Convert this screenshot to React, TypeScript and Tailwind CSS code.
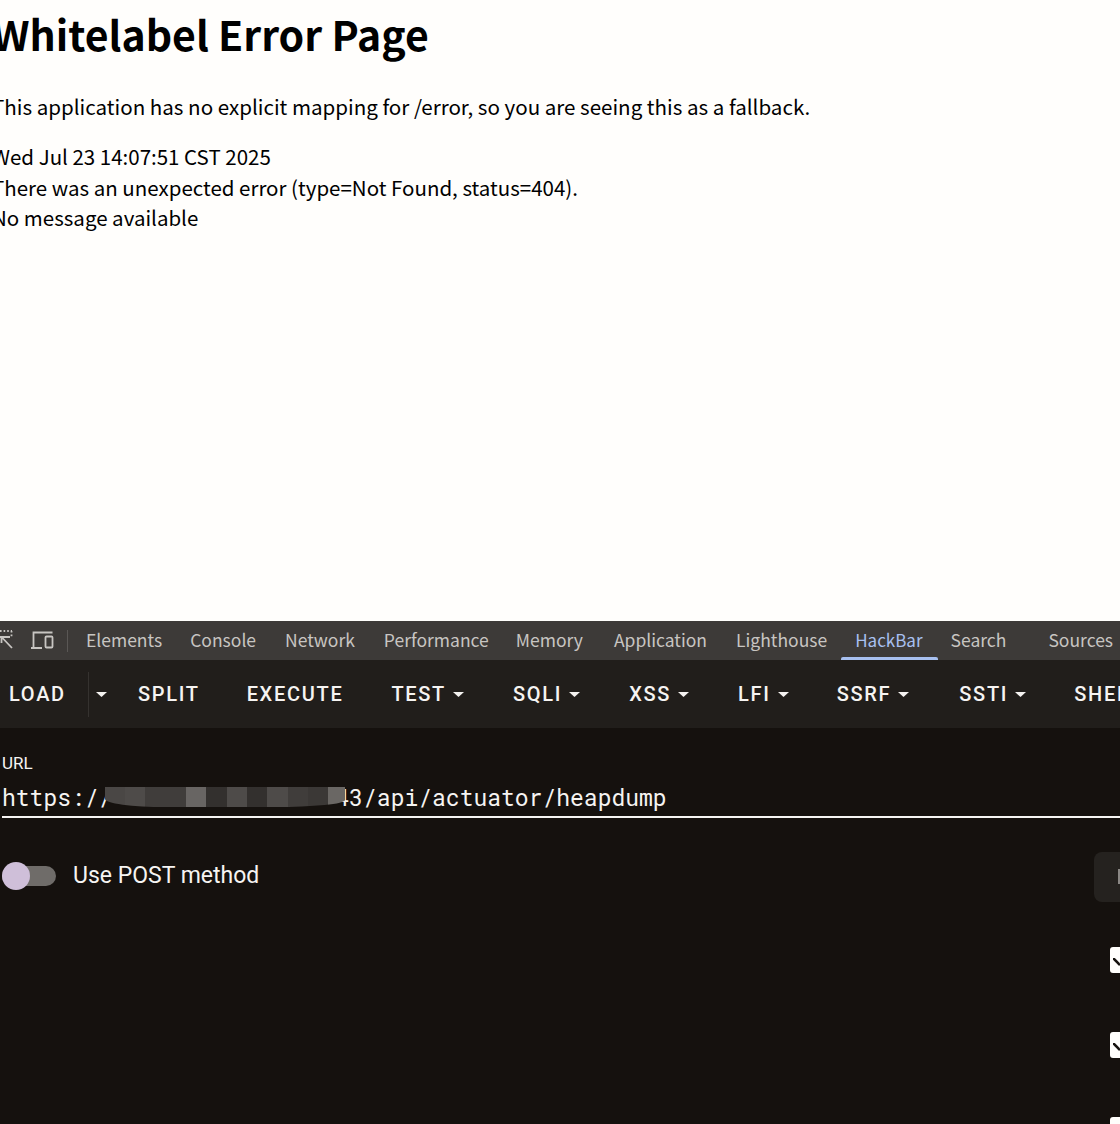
const tabs = [
  { name: "Elements", ml: "ml-[18px]" },
  { name: "Console", ml: "ml-[28px]" },
  { name: "Network", ml: "ml-[29px]" },
  { name: "Performance", ml: "ml-[29px]" },
  { name: "Memory", ml: "ml-[27px]" },
  { name: "Application", ml: "ml-[31px]" },
  { name: "Lighthouse", ml: "ml-[29px]" },
]

const tools = [
  { name: "TEST", ml: "ml-[48px]" },
  { name: "SQLI", ml: "ml-[49px]" },
  { name: "XSS", ml: "ml-[49px]" },
  { name: "LFI", ml: "ml-[49px]" },
  { name: "SSRF", ml: "ml-[48px]" },
  { name: "SSTI", ml: "ml-[50px]" },
]

const blur = [
  "w-[20px] bg-[#4a4745]",
  "w-[20px] bg-[#4e4b49]",
  "w-[41px] bg-[#403d3b]",
  "w-[20px] bg-[#686563]",
  "w-[21px] bg-[#33302e]",
  "w-[20px] bg-[#4e4b49]",
  "w-[20px] bg-[#33302e]",
  "w-[21px] bg-[#4e4b49]",
  "w-[20px] bg-[#403d3b]",
  "w-[20px] bg-[#3b3836]",
  "w-[17px] bg-[#6a6764]",
]

function Caret({ className }: { className?: string }) {
  return (
    <svg width="11" height="5" viewBox="0 0 11 5" className={className}>
      <path d="M0 0h11L5.500 5z" fill="#f4f2f0" />
    </svg>
  )
}

function Check() {
  return (
    <div className="w-[20px] h-[26px] bg-[#fffefc] rounded-[3px] shrink-0 overflow-hidden pl-[3px] pt-[11px]">
      <svg width="17" height="12" viewBox="0 0 17 12">
        <path d="M0 0l7 7" stroke="#15110e" strokeWidth="2.6" fill="none" />
      </svg>
    </div>
  )
}

export default function App() {
  return (
    <div className="w-[1120px] h-[1124px] overflow-hidden flex flex-col bg-[#fffefc]">
      {/* error page */}
      <div className="h-[621px] shrink-0 text-black font-['Noto_Sans_CJK_SC','Noto_Sans',sans-serif] -ml-[8px]">
        <h1 className="pt-[5px] text-[41px] leading-[56px] font-bold whitespace-nowrap">Whitelabel Error Page</h1>
        <p className="mt-[29.5px] text-[20.57px] leading-[30px] whitespace-nowrap">
          This application has no explicit mapping for /error, so you are seeing this as a fallback.
        </p>
        <div className="mt-[20.5px] text-[20.5px] leading-[30.5px] whitespace-nowrap">
          <div>Wed Jul 23 14:07:51 CST 2025</div>
          <div>There was an unexpected error (type=Not Found, status=404).</div>
          <div>No message available</div>
        </div>
      </div>

      {/* devtools tab strip */}
      <div className="h-[39px] shrink-0 flex items-center bg-[#3d3a38] text-[#c8c5c2] text-[17.5px] leading-[26px] whitespace-nowrap font-['Noto_Sans_CJK_SC','Noto_Sans',sans-serif]">
        <svg width="67" height="39" viewBox="0 0 67 39" className="shrink-0" fill="none" stroke="#c8c5c2" strokeWidth="1.8">
          <path d="M0 10h12M11.500 10v6" strokeDasharray="1.600 2" />
          <path d="M0 16h10M1.500 16v6M2 16.500l10 10.500" />
          <path d="M33.500 27V11.500h19M31 27h11" />
          <rect x="45.500" y="15.500" width="7" height="11" rx="1" />
        </svg>
        <div className="w-px h-[22px] bg-[#5a5755] shrink-0" />
        <div className="flex items-center mb-[1px]">
          {tabs.map((t) => (
            <span key={t.name} className={t.ml}>
              {t.name}
            </span>
          ))}
          <div className="relative ml-[28px] text-[17px] leading-[26px] text-[#a8c0f0]">
            HackBar
            <div className="absolute -left-[14px] -right-[15px] -bottom-[7px] h-[3px] bg-[#a8c0f0] rounded-t-[2px]" />
          </div>
          <span className="ml-[28px]">Search</span>
          <span className="ml-[42px]">Sources</span>
        </div>
      </div>

      {/* hackbar toolbar */}
      <div className="h-[68px] shrink-0 flex items-center bg-[#211e1b] text-[#f6f4f2] text-[20px] font-medium tracking-[1.7px] whitespace-nowrap font-['Roboto',sans-serif]">
        <span className="ml-[9px] shrink-0">LOAD</span>
        <div className="ml-[22px] w-px h-[45px] bg-[#35322f] shrink-0" />
        <Caret className="ml-[7px] shrink-0" />
        <span className="ml-[31px] shrink-0">SPLIT</span>
        <span className="ml-[47px] shrink-0">EXECUTE</span>
        {tools.map((t) => (
          <div key={t.name} className={`${t.ml} flex items-center shrink-0`}>
            <span>{t.name}</span>
            <Caret className="ml-[7px] shrink-0" />
          </div>
        ))}
        <span className="ml-[48px] shrink-0">SHELL</span>
      </div>

      {/* request panel */}
      <div className="flex-1 min-h-0 bg-[#15110e] text-[#f6f4f2] overflow-hidden">
        <div className="pl-[2px]">
          <div className="pt-[26px] text-[17px] leading-[18px] font-['Roboto',sans-serif]">URL</div>
          <div className="relative mt-[11px] h-[35px] flex items-start border-b-2 border-[#f6f4f2] text-[23px] leading-[28px] whitespace-nowrap font-['Roboto_Mono','DejaVu_Sans_Mono',monospace]">
            <span>https://</span>
            <span className="ml-[223px]">43/api/actuator/heapdump</span>
            {/* redacted host */}
            <div className="absolute left-[103px] top-[4px] flex h-[20px] rounded-bl-[60px_8px] rounded-br-[70px_7px] overflow-hidden">
              {blur.map((c, i) => (
                <div key={i} className={c} />
              ))}
            </div>
          </div>
        </div>

        <div className="relative mt-[33px] h-[50px] flex items-center pl-[2px]">
          <div className="relative w-[54px] h-[20px] rounded-full bg-[#6f6c69] shrink-0">
            <div className="absolute left-0 -top-[4px] w-[28px] h-[28px] rounded-full bg-[#cfbfd9]" />
          </div>
          <span className="ml-[17px] text-[23px] font-['Roboto',sans-serif]">Use POST method</span>
          <div className="absolute left-[1094px] top-[1px] w-[40px] h-[50px] rounded-[8px] bg-[#25221f] pl-[24px] pt-[17px]">
            <div className="w-[3px] h-[15px] bg-[#8a8784]" />
          </div>
        </div>

        <div className="ml-[1110px] mt-[46px] flex flex-col gap-[59px]">
          <Check />
          <Check />
          <Check />
        </div>
      </div>
    </div>
  )
}
